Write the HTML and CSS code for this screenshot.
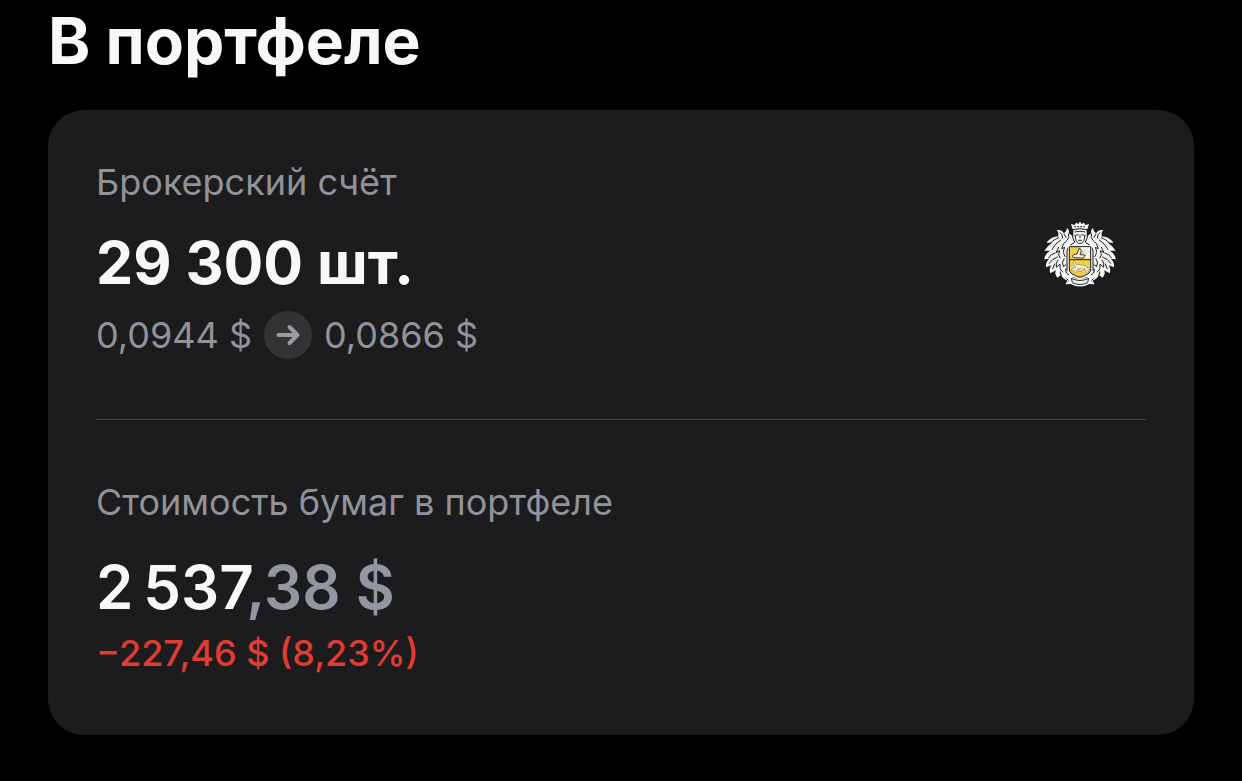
FILE: index.html
```html
<!DOCTYPE html>
<html lang="ru">
<head>
<meta charset="utf-8">
<meta name="viewport" content="width=device-width, initial-scale=1">
<title>В портфеле</title>
<link rel="stylesheet" href="styles.css">
</head>
<body>
<main class="portfolio">
  <h1 class="title">В портфеле</h1>
  <div class="card">
    <section class="holding">
      <div class="holding-info">
        <h2 class="label">Брокерский счёт</h2>
        <p class="value">29 300 шт.</p>
        <p class="prices">
          <span>0,0944 $</span>
          <svg class="arrow" viewBox="0 0 48 48" aria-hidden="true">
            <circle cx="24" cy="24" r="24" fill="#333333"/>
            <path d="M14.500 24H33M25.500 16L33.500 24L25.500 32" fill="none" stroke="#9799a3" stroke-width="4" stroke-linecap="round" stroke-linejoin="round"/>
          </svg>
          <span>0,0866 $</span>
        </p>
      </div>
      <svg class="crest" viewBox="6 9 216 198" role="img" aria-label="Брокер">
        <defs>
          <g id="half">
            <path d="M97 76L94 60Q89 50 80 46Q84 36 74 29Q76 40 66 46Q60 34 44 36Q52 44 48 56Q30 54 13 74L31 74Q17 82 7 98L24 98Q8 108 7 124L22 122Q10 132 12 148L28 142Q20 152 25 166L42 157Q36 168 46 179L58 171Q62 184 78 188L92 190V86Z" fill="#f5f5f5"/>
            <g fill="none" stroke="#1c1c1e" stroke-width="3" stroke-linecap="round" stroke-linejoin="round">
              <path d="M80 48Q84 60 74 68Q61 76 59 92L68 88Q60 104 70 116"/>
              <path d="M54 44Q63 48 62 60M66 48L72 58M50 59Q36 64 26 74M56 66Q40 76 30 94"/>
              <path d="M50 88L42 104L53 98Q46 112 54 120M39 105Q26 108 20 119M46 117Q30 122 22 136"/>
              <path d="M48 126Q40 134 43 148L54 138Q52 154 62 162M66 122Q58 132 64 146L72 140M38 138L32 152M72 152Q68 164 80 170M55 162L57 172"/>
              <path d="M92 80Q76 84 75 99V158"/>
            </g>
          </g>
        </defs>
        <use href="#half"/>
        <use href="#half" transform="matrix(-1 0 0 1 228 0)"/>
        <path d="M92 34L87 18L98 21L102 14L110 18L114 9L118 18L126 14L130 21L141 18L136 34Z" fill="#f5f5f5"/>
        <path d="M97 26L131 26" stroke="#1c1c1e" stroke-width="3" stroke-dasharray="5 4"/>
        <path d="M93 35Q114 29 135 35L136 58L130 73L148 85H80L98 73L92 58Z" fill="#f5f5f5" stroke="#1c1c1e" stroke-width="3"/>
        <path d="M98 42Q114 37 130 42M101 52L110 50M118 50L127 52M114 51V60M108 67H120M99 50L102 68L109 76H119L126 68L129 50" fill="none" stroke="#1c1c1e" stroke-width="2.800"/>
        <path d="M78 81H150V158Q150 174 114 185Q78 174 78 158Z" fill="#f5f5f5"/>
        <path d="M82 86H146V156Q146 168 114 178Q82 168 82 156Z" fill="#edcf4d" stroke="#1c1c1e" stroke-width="3"/>
        <path d="M116 88H144V122L128 120L121 111L128 104L117 94Z" fill="#f5f5f5"/>
        <path d="M90 115Q94 108 105 108L112 90L118 97L114 110L130 111L124 120L96 119Z" fill="#f5f5f5" stroke="#1c1c1e" stroke-width="2.500"/>
        <path d="M124 94L135 107M134 94L143 104" stroke="#aaa" stroke-width="2"/>
        <path d="M83 125H145" stroke="#1c1c1e" stroke-width="3"/>
        <g fill="none" stroke-linecap="round" stroke-linejoin="round">
          <path d="M96 132L101 142L119 144Q132 144 134 155L142 151M130 149L136 162M124 151L113 158M105 151L92 155M106 150L98 162" stroke="#6a5b2d" stroke-width="7"/>
          <path d="M96 132L101 142L119 144Q132 144 134 155L142 151M130 149L136 162M124 151L113 158M105 151L92 155M106 150L98 162M103 147H126" stroke="#f5f5f5" stroke-width="5"/>
        </g>
        <path d="M70 178L90 178Q114 188 138 178L158 178L152 189L158 199L142 198Q114 213 86 198L70 199L76 189Z" fill="#f5f5f5"/>
        <path d="M88 180L91 194Q114 205 137 194L140 180M90 182Q114 193 138 182M73 181L80 188M155 181L148 188" fill="none" stroke="#1c1c1e" stroke-width="2.800"/>
      </svg>
    </section>
    <section class="worth">
      <h2 class="label">Стоимость бумаг в портфеле</h2>
      <p class="value total">2&#8201;537<span class="fraction">,38 $</span></p>
      <p class="change">−227,46 $ (8,23%)</p>
    </section>
  </div>
</main>
</body>
</html>
```
FILE: styles.css
```css
* {
  box-sizing: border-box;
}

body {
  margin: 0;
  background: #000;
  color: #f8f8fa;
  font-family: Inter, "Liberation Sans", sans-serif;
}

h1, h2, p {
  margin: 0;
}

.portfolio {
  padding: 1px 48px 46px;
}

.title {
  margin-bottom: 29px;
  font-size: 64px;
  font-weight: 700;
  line-height: 80px;
}

.card {
  padding: 48px 48px 58px;
  border-radius: 36px;
  background: #1c1c1e;
}

.holding {
  display: flex;
  justify-content: space-between;
  padding-bottom: 60px;
  border-bottom: 1px solid #48484a;
}

.label, .prices, .change {
  font-size: 36px;
  font-weight: 400;
  line-height: 48px;
}

.label, .prices {
  color: #92929a;
}

.fraction {
  color: #9296a0;
}

.value {
  margin: 21px 0 12px;
  font-size: 59px;
  font-weight: 700;
  line-height: 72px;
}

.prices {
  display: flex;
  align-items: center;
  gap: 12px;
}

.arrow {
  width: 48px;
  height: 48px;
}

.crest {
  flex: none;
  width: 72px;
  height: 66px;
  margin: 63px 30px 0 0;
}

.worth {
  padding-top: 58px;
}

.total {
  margin: 25px 0 6px;
  font-size: 60px;
  font-weight: 600;
}

.change {
  color: #e03c32;
  font-weight: 500;
}
```
